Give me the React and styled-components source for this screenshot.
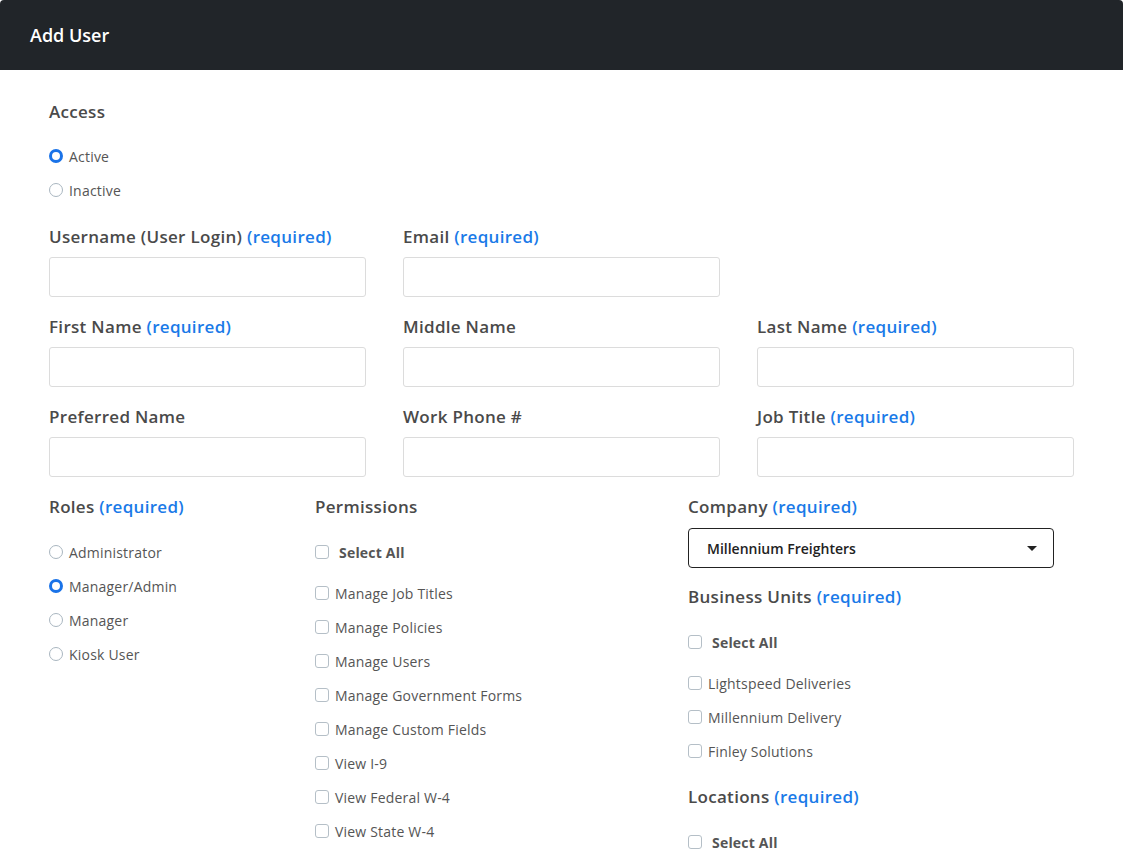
import React from "react";
import styled, { createGlobalStyle } from "styled-components";

const Global = createGlobalStyle`
  body { margin: 0; background: #fff; font-family: "Open Sans", "Noto Sans", sans-serif; color: #495057; }
  * { box-sizing: border-box; }
`;
const Header = styled.div`
  height: 70px; background: #212529; color: #fff; display: flex; align-items: center;
  padding-left: 30px; font-size: 18px; font-weight: 600; border-top-left-radius: 4px; border-top-right-radius: 4px;
`;
const Body = styled.div`padding: 0 49px; width: 1074px;`;
const Label = styled.div`
  font-size: 17px; letter-spacing: 0.3px; font-weight: 600; color: #4a4a4a; height: 24px; line-height: 24px;
  margin-top: ${p => p.$mt || 0}px; white-space: nowrap;
  span { color: #1a7ae8; }
`;
const Grid = styled.div`display: grid; grid-template-columns: 317px 317px 317px; column-gap: 37px; row-gap: 18px; margin-top: 18px;`;
const Field = styled.div`display: flex; flex-direction: column; gap: 8px;`;
const Input = styled.div`height: 40px; border: 1px solid #dcdcdc; border-radius: 3px;`;
const Option = styled.div`
  display: flex; align-items: center; height: 34px; font-size: 14px; color: #555; gap: 6px;
  font-weight: ${p => p.$bold ? 700 : 400}; letter-spacing: 0.2px; white-space: nowrap;
`;
const Radio = styled.span`
  width: 14px; height: 14px; border-radius: 50%;
  border: ${p => p.$on ? "3px solid #1a73e8" : "1.5px solid #a9b6c0"};
`;
const Box = styled.span`width: 14px; height: 14px; border: 1px solid #b5bfc7; border-radius: 3px; margin-right: ${p => p.$gap || 0}px;`;
const List = styled.div`display: flex; flex-direction: column; margin-top: ${p => p.$mt || 0}px;`;
const Spacer = styled.div`height: 7px;`;
const Lower = styled.div`display: grid; grid-template-columns: 266px 373px 366px; margin-top: 18px;`;
const Select = styled.div`
  height: 40px; border: 1px solid #222; border-radius: 4px; margin-top: 9px; display: flex; align-items: center;
  justify-content: space-between; padding: 0 16px 0 18px; font-size: 14px; font-weight: 600; color: #222;
  &::after { content: ""; border-left: 5px solid transparent; border-right: 5px solid transparent; border-top: 5px solid #222; }
`;

const Req = ({ children, req }) => <Label>{children}{req && <> <span>(required)</span></>}</Label>;
const Check = ({ children, all }) => (
  <Option $bold={all}><Box $gap={all ? 4 : 0} />{children}</Option>
);

export default function App() {
  return (
    <>
      <Global />
      <Header>Add User</Header>
      <Body>
        <Label $mt={30}>Access</Label>
        <List $mt={15}>
          <Option><Radio $on />Active</Option>
          <Option><Radio />Inactive</Option>
        </List>
        <Grid>
          <Field><Req req>Username (User Login)</Req><Input /></Field>
          <Field><Req req>Email</Req><Input /></Field>
          <div />
          <Field><Req req>First Name</Req><Input /></Field>
          <Field><Req>Middle Name</Req><Input /></Field>
          <Field><Req req>Last Name</Req><Input /></Field>
          <Field><Req>Preferred Name</Req><Input /></Field>
          <Field><Req>Work Phone #</Req><Input /></Field>
          <Field><Req req>Job Title</Req><Input /></Field>
        </Grid>
        <Lower>
          <div>
            <Req req>Roles</Req>
            <List $mt={16}>
              {["Administrator", "Manager/Admin", "Manager", "Kiosk User"].map((r, i) => (
                <Option key={r}><Radio $on={i === 1} />{r}</Option>
              ))}
            </List>
          </div>
          <div>
            <Req>Permissions</Req>
            <List $mt={16}>
              <Check all>Select All</Check>
              <Spacer />
              {["Manage Job Titles", "Manage Policies", "Manage Users", "Manage Government Forms", "Manage Custom Fields", "View I-9", "View Federal W-4", "View State W-4"].map(p => <Check key={p}>{p}</Check>)}
            </List>
          </div>
          <div>
            <Req req>Company</Req>
            <Select>Millennium Freighters</Select>
            <Label $mt={17}>Business Units <span>(required)</span></Label>
            <List $mt={16}>
              <Check all>Select All</Check>
              <Spacer />
              {["Lightspeed Deliveries", "Millennium Delivery", "Finley Solutions"].map(p => <Check key={p}>{p}</Check>)}
            </List>
            <Label $mt={17}>Locations <span>(required)</span></Label>
            <List $mt={16}><Check all>Select All</Check></List>
          </div>
        </Lower>
      </Body>
    </>
  );
}
